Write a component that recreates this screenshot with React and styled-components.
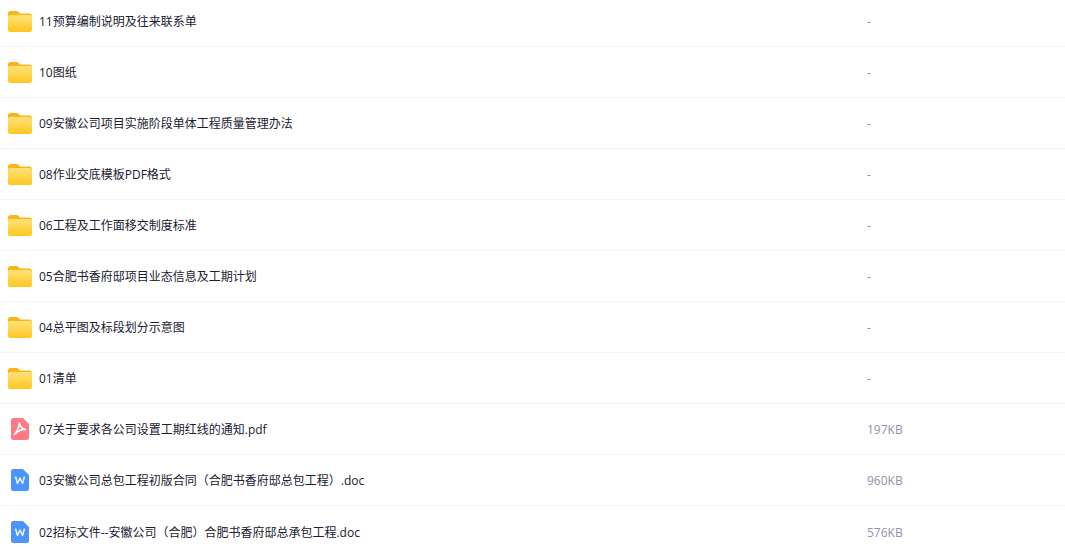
import React from "react";
import styled, { createGlobalStyle } from "styled-components";

const GlobalStyle = createGlobalStyle`
  html, body {
    margin: 0;
    padding: 0;
    background: #fff;
  }
`;

const files = [
  { kind: "folder", name: "11预算编制说明及往来联系单", size: "-" },
  { kind: "folder", name: "10图纸", size: "-" },
  { kind: "folder", name: "09安徽公司项目实施阶段单体工程质量管理办法", size: "-" },
  { kind: "folder", name: "08作业交底模板PDF格式", size: "-" },
  { kind: "folder", name: "06工程及工作面移交制度标准", size: "-" },
  { kind: "folder", name: "05合肥书香府邸项目业态信息及工期计划", size: "-" },
  { kind: "folder", name: "04总平图及标段划分示意图", size: "-" },
  { kind: "folder", name: "01清单", size: "-" },
  { kind: "pdf", name: "07关于要求各公司设置工期红线的通知.pdf", size: "197KB" },
  { kind: "doc", name: "03安徽公司总包工程初版合同（合肥书香府邸总包工程）.doc", size: "960KB" },
  { kind: "doc", name: "02招标文件--安徽公司（合肥）合肥书香府邸总承包工程.doc", size: "576KB" },
];

const FolderIcon = () => (
  <svg width="24" height="22" viewBox="0 0 24 22">
    <defs>
      <linearGradient id="folderFront" x1="0" y1="0" x2="0" y2="1">
        <stop offset="0" stopColor="#ffe27a" />
        <stop offset="1" stopColor="#ffc71f" />
      </linearGradient>
    </defs>
    <path
      d="M0 3.500C0 2 1 1 2.500 1h6c.8 0 1.400.3 1.900.8L12 3.500h9.500C23 3.500 24 4.500 24 6v3H0z"
      fill="#fdb515"
    />
    <rect x="0" y="5" width="24" height="17" rx="2" fill="url(#folderFront)" />
  </svg>
);

const PdfIcon = () => (
  <svg width="18" height="22" viewBox="0 0 18 22">
    <path
      d="M2.500 0H12l6 6v13.500a2.500 2.500 0 0 1-2.500 2.500h-13A2.500 2.500 0 0 1 0 19.500v-17A2.500 2.500 0 0 1 2.500 0z"
      fill="#ff7a85"
    />
    <path
      d="M8.500 5c-.3 3.500-2 7.500-5 11.500M8.500 5c.6 3.500 2.500 6 6 6.500-3.500-.3-7 1-9.500 4"
      fill="none"
      stroke="#fff"
      strokeWidth="1.600"
      strokeLinecap="round"
      strokeLinejoin="round"
    />
  </svg>
);

const DocIcon = () => (
  <svg width="18" height="22" viewBox="0 0 18 22">
    <path
      d="M2.500 0H12l6 6v13.500a2.500 2.500 0 0 1-2.500 2.500h-13A2.500 2.500 0 0 1 0 19.500v-17A2.500 2.500 0 0 1 2.500 0z"
      fill="#4a94fb"
    />
    <path
      d="M4.500 7.500l2 7L9 9l2.500 5.500 2-7"
      fill="none"
      stroke="#eaf3ff"
      strokeWidth="1.500"
      strokeLinejoin="round"
    />
  </svg>
);

const icons = { folder: FolderIcon, pdf: PdfIcon, doc: DocIcon };

const Page = styled.div`
  height: 556px;
  overflow: hidden;
  background: #fff;
  font-family: "Open Sans", "Noto Sans CJK SC", sans-serif;
  font-size: 12px;
`;

const List = styled.ul`
  list-style: none;
  margin: -4px 0 0;
  padding: 0;
`;

const Row = styled.li`
  display: grid;
  grid-template-columns: 867px 1fr;
  align-items: center;
  height: 51px;
  box-sizing: border-box;
  border-bottom: 1px solid #f2f6fb;
  &:last-child {
    border-bottom: 0;
  }
`;

const NameCell = styled.div`
  display: flex;
  align-items: center;
`;

const IconSlot = styled.span`
  display: flex;
  justify-content: center;
  align-items: center;
  width: 24px;
  margin-left: 8px;
  margin-right: 7px;
`;

const Name = styled.span`
  color: #1a2030;
  line-height: 20px;
  padding-top: 2px;
`;

const Size = styled.div`
  color: #8e95a8;
  line-height: 20px;
  padding-top: 2px;
`;

const App = () => {
  return (
    <Page>
      <GlobalStyle />
      <List>
        {files.map((file) => {
          const Icon = icons[file.kind];
          return (
            <Row key={file.name}>
              <NameCell>
                <IconSlot>
                  <Icon />
                </IconSlot>
                <Name>{file.name}</Name>
              </NameCell>
              <Size>{file.size}</Size>
            </Row>
          );
        })}
      </List>
    </Page>
  );
};

export default App;
